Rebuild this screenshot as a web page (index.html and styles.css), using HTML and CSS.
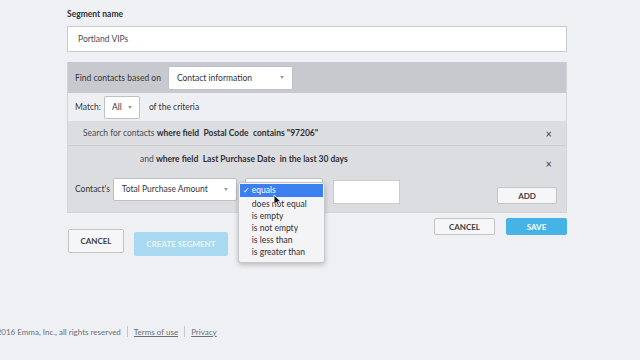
FILE: index.html
```html
<!DOCTYPE html>
<html>
<head>
  <title>Create segment</title>
  <link rel="stylesheet" href="styles.css">
</head>
<body>
  <div class="page">
    <div class="field-label">Segment name</div>
    <div class="text-input name-input">Portland VIPs</div>

    <div class="panel">
      <div class="panel-head">
        <span class="lbl">Find contacts based on</span>
        <div class="select source-select"><span>Contact information</span><span class="caret"></span></div>
      </div>
      <div class="match-row">
        <span class="lbl">Match:</span>
        <div class="select match-select"><span>All</span><span class="caret"></span></div>
        <span class="lbl">of the criteria</span>
      </div>
      <div class="crit crit-first">
        <div class="crit-text"><span class="light">Search for contacts</span> <b>where field</b>&nbsp; <b>Postal Code</b>&nbsp; <b>contains "97206"</b></div>
        <span class="close">&times;</span>
      </div>
      <div class="crit crit-second">
        <div class="crit-line">
          <div class="crit-text indent"><span class="light">and</span> <b>where field</b>&nbsp; <b>Last Purchase Date</b>&nbsp; <b>in the last 30 days</b></div>
          <span class="close">&times;</span>
        </div>
        <div class="builder">
          <span class="lbl">Contact's</span>
          <div class="select field-select"><span>Total Purchase Amount</span><span class="caret"></span></div>
          <div class="op-wrap">
            <div class="select op-select"></div>
            <ul class="menu">
              <li class="active"><span class="check">&#10003;</span>equals</li>
              <li>does not equal</li>
              <li>is empty</li>
              <li>is not empty</li>
              <li>is less than</li>
              <li>is greater than</li>
            </ul>
            <svg class="cursor" width="9" height="13" viewBox="0 0 9 13">
              <path d="M1 1 L1 10.5 L3.3 8.4 L5 12 L6.4 11.3 L4.8 7.8 L7.9 7.6 Z" fill="#111" stroke="#fff" stroke-width="0.8"/>
            </svg>
          </div>
          <div class="text-input value-input"></div>
          <button class="btn add-btn">ADD</button>
        </div>
      </div>
    </div>

    <div class="panel-actions">
      <button class="btn">CANCEL</button>
      <button class="btn btn-blue">SAVE</button>
    </div>

    <div class="form-actions">
      <button class="btn big-btn">CANCEL</button>
      <button class="btn big-btn btn-faded">CREATE SEGMENT</button>
    </div>
  </div>

  <div class="footer">
    <span>&copy;2016 Emma, Inc., all rights reserved</span>
    <span class="sep"></span>
    <a href="#">Terms of use</a>
    <span class="sep"></span>
    <a href="#">Privacy</a>
  </div>
</body>
</html>
```

FILE: styles.css
```css
body {
  margin: 0;
  background-color: #eff0f4;
  font-family: Lato, "Open Sans", Arial, sans-serif;
  color: #3a3c42;
  font-size: 8.5px;
}
.page {
  width: 500px;
  padding: 9px 0 0 67px;
}
.field-label {
  font-weight: bold;
  font-size: 8.5px;
  color: #2f3136;
  margin-bottom: 7px;
}
.text-input {
  background-color: #fff;
  border: 1px solid #c9cace;
  box-sizing: border-box;
}
.name-input {
  height: 26px;
  line-height: 24px;
  padding-left: 10px;
  color: #4a4c52;
}
.panel {
  margin-top: 10px;
  border: 1px solid #d3d4d8;
  border-top: none;
}
.panel-head {
  display: flex;
  align-items: center;
  height: 31px;
  background-color: #c8c9ce;
  padding: 0 7px;
  gap: 7px;
}
.lbl {
  color: #33353a;
}
.select {
  display: flex;
  align-items: center;
  justify-content: space-between;
  background-color: #fff;
  border: 1px solid #bfc0c4;
  border-radius: 2px;
  box-sizing: border-box;
  padding: 0 8px;
  color: #34363b;
}
.caret {
  width: 0;
  height: 0;
  border-left: 2.5px solid transparent;
  border-right: 2.5px solid transparent;
  border-top: 3px solid #9a9ca2;
}
.source-select {
  width: 125px;
  height: 24px;
}
.match-row {
  display: flex;
  align-items: center;
  height: 28px;
  padding: 0 7px;
  gap: 9px;
  background-color: #eeeff2;
}
.match-row .lbl:first-child {
  margin-right: -6px;
}
.match-select {
  width: 36px;
  height: 23px;
  padding: 0 7px;
}
.crit {
  background-color: #dcdde1;
}
.crit-first {
  display: flex;
  align-items: center;
  justify-content: space-between;
  height: 24px;
  padding: 0 14px 0 15px;
  border-bottom: 1px solid #cdced2;
}
.crit-text b {
  color: #2e3035;
}
.light {
  color: #4a4c52;
}
.close {
  font-size: 11px;
  color: #3a3c40;
}
.crit-second {
  padding: 8px 14px 8px 7px;
}
.crit-line {
  display: flex;
  justify-content: space-between;
  align-items: flex-start;
}
.crit-line .close {
  margin-top: 3px;
}
.indent {
  padding-left: 65px;
}
.builder {
  display: flex;
  align-items: center;
  margin-top: 4px;
}
.field-select {
  width: 124px;
  height: 23px;
  margin-left: 3px;
}
.op-wrap {
  position: relative;
  margin-left: 8px;
}
.op-select {
  width: 78px;
  height: 23px;
}
.menu {
  position: absolute;
  left: -7px;
  top: 4px;
  width: 85px;
  margin: 0;
  padding: 1px 0 4px;
  list-style: none;
  background-color: #f4f4f6;
  border: 1px solid #c6c7cb;
  border-radius: 3px;
  box-shadow: 0 2px 5px rgba(0, 0, 0, 0.22);
  z-index: 2;
}
.menu li {
  height: 12px;
  line-height: 12px;
  padding-left: 13px;
  color: #2e3035;
  font-size: 8.5px;
}
.menu li.active {
  position: relative;
  height: 13px;
  margin: 0 1px 1px;
  padding-left: 12px;
  background-color: #3c80ef;
  color: #fff;
}
.check {
  position: absolute;
  left: 3px;
  font-size: 8px;
}
.cursor {
  position: absolute;
  left: 28px;
  top: 16px;
  z-index: 3;
}
.value-input {
  width: 67px;
  height: 24px;
  margin-left: 10px;
  margin-top: 5px;
}
.btn {
  font-family: Lato, "Open Sans", Arial, sans-serif;
  font-size: 8px;
  font-weight: bold;
  color: #3c3e44;
  background-color: #f6f6f8;
  border: 1px solid #c3c4c8;
  border-radius: 2px;
  padding: 0;
  box-sizing: border-box;
}
.add-btn {
  width: 60px;
  height: 17px;
  margin-left: auto;
  margin-right: -5px;
  margin-top: 13px;
}
.panel-actions {
  display: flex;
  justify-content: flex-end;
  gap: 11px;
  margin-top: 5px;
}
.panel-actions .btn {
  width: 61px;
  height: 17px;
}
.btn-blue {
  background-color: #46b3e6;
  border-color: #46b3e6;
  color: #fff;
}
.form-actions {
  display: flex;
  gap: 10px;
  margin-top: -6px;
  padding-left: 1px;
}
.big-btn {
  width: 56px;
  height: 24px;
}
.btn-faded {
  width: 94px;
  margin-top: 3px;
  background-color: #a9d9f0;
  border-color: #a9d9f0;
  color: #e9f6fc;
}
.footer {
  display: flex;
  align-items: center;
  gap: 6px;
  margin: 70px 0 0 -10px;
  color: #6d6f75;
  font-size: 8px;
}
.footer a {
  color: #6d6f75;
  text-decoration: underline;
}
.sep {
  width: 1px;
  height: 11px;
  background-color: #c5c6ca;
}
```
